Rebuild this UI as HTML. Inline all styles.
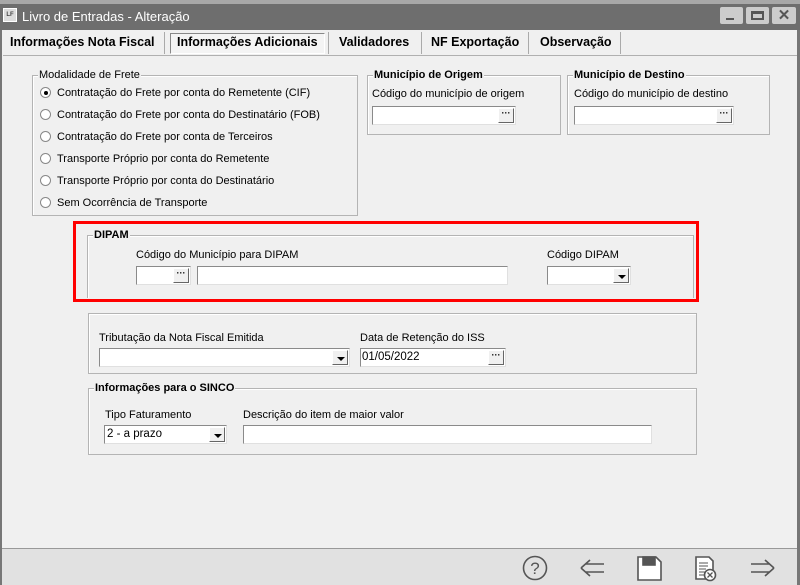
<!DOCTYPE html>
<html><head><meta charset="utf-8"><style>
*{margin:0;padding:0;box-sizing:border-box}
body{width:800px;height:585px;overflow:hidden;background:#f0f0f0;font-family:"Liberation Sans",sans-serif;font-size:11px;color:#000;position:relative}
.a{position:absolute}
.title{left:0;top:0;width:800px;height:30px;background:#6e6e6e;border-top:4px solid #a8a8a8}
.grp{position:absolute;border:1px solid #b4b4b4;box-shadow:1px 1px 0 #fff inset}
.gt{position:absolute;top:-7px;left:5px;background:#f0f0f0;padding:0 1px;font-size:11px}
.b{font-weight:bold}
.in{position:absolute;background:#fff;border:1px solid #8a8a8a;border-right-color:#e0e0e0;border-bottom-color:#e0e0e0;height:19px}
.btn{position:absolute;right:1px;top:1px;width:16px;height:15px;background:#f0f0f0;border:1px solid #fff;border-right-color:#666;border-bottom-color:#666;font-size:9px;line-height:9px;text-align:center;font-weight:bold}
.tri{position:absolute;left:4px;top:6px;width:0;height:0;border-left:4px solid transparent;border-right:4px solid transparent;border-top:4px solid #000}
.rad{position:absolute;width:11px;height:11px;border-radius:50%;border:1px solid #888;background:#fff}
.tab{position:absolute;top:35px;font-weight:bold;font-size:12.5px}
.sep{position:absolute;top:32px;width:1px;height:22px;background:#aaa}
</style></head><body>
<div class="a title"></div>
<div class="a" style="left:3px;top:8px;width:14px;height:14px;background:#ddd;border:1px solid #fff;font-size:6px;line-height:12px;text-align:center;font-weight:bold;color:#444">LF</div>
<div class="a" style="left:22px;top:9px;color:#fff;font-size:13px">Livro de Entradas - Alteração</div>
<div class="a" style="left:720px;top:7px;width:23px;height:17px;background:#ccc;border-radius:2px"><div class="a" style="left:6px;top:11px;width:8px;height:2px;background:#555"></div></div>
<div class="a" style="left:746px;top:7px;width:23px;height:17px;background:#ccc;border-radius:2px"><div class="a" style="left:5px;top:4px;width:13px;height:9px;border:2px solid #555;border-top-width:3px"></div></div>
<div class="a" style="left:772px;top:7px;width:24px;height:17px;background:#ccc;border-radius:2px;text-align:center;font-weight:bold;font-size:15px;line-height:17px;color:#555">✕</div>
<div class="a" style="left:0;top:30px;width:2px;height:555px;background:#777"></div>
<div class="a" style="left:797px;top:30px;width:3px;height:555px;background:#777"></div>
<div class="a" style="left:3px;top:55px;width:794px;height:1px;background:#b0b0b0"></div>
<div class="tab" style="left:10px">Informações Nota Fiscal</div>
<div class="sep" style="left:164px"></div>
<div class="a" style="left:170px;top:33px;width:155px;height:21px;border:1px solid #888;border-right-color:#fff;border-bottom-color:#fff;background:#f4f4f4"></div>
<div class="tab" style="left:177px">Informações Adicionais</div>
<div class="sep" style="left:328px"></div>
<div class="tab" style="left:339px">Validadores</div>
<div class="sep" style="left:421px"></div>
<div class="tab" style="left:431px">NF Exportação</div>
<div class="sep" style="left:528px"></div>
<div class="tab" style="left:540px">Observação</div>
<div class="sep" style="left:620px"></div>

<div class="grp" style="left:32px;top:75px;width:326px;height:141px"><div class="gt">Modalidade de Frete</div></div>
<div class="rad" style="left:40px;top:87px"><div class="a" style="left:3px;top:3px;width:4px;height:4px;border-radius:50%;background:#000"></div></div>
<div class="a" style="left:57px;top:87px">Contratação do Frete por conta do Remetente (CIF)</div>
<div class="rad" style="left:40px;top:109px"></div><div class="a" style="left:57px;top:109px">Contratação do Frete por conta do Destinatário (FOB)</div>
<div class="rad" style="left:40px;top:131px"></div><div class="a" style="left:57px;top:131px">Contratação do Frete por conta de Terceiros</div>
<div class="rad" style="left:40px;top:153px"></div><div class="a" style="left:57px;top:153px">Transporte Próprio por conta do Remetente</div>
<div class="rad" style="left:40px;top:175px"></div><div class="a" style="left:57px;top:175px">Transporte Próprio por conta do Destinatário</div>
<div class="rad" style="left:40px;top:197px"></div><div class="a" style="left:57px;top:197px">Sem Ocorrência de Transporte</div>

<div class="grp" style="left:367px;top:75px;width:194px;height:60px"><div class="gt b">Município de Origem</div></div>
<div class="a" style="left:372px;top:88px">Código do município de origem</div>
<div class="in" style="left:372px;top:106px;width:144px"><div class="btn">···</div></div>
<div class="grp" style="left:567px;top:75px;width:203px;height:60px"><div class="gt b">Município de Destino</div></div>
<div class="a" style="left:574px;top:88px">Código do município de destino</div>
<div class="in" style="left:574px;top:106px;width:160px"><div class="btn">···</div></div>

<div class="a" style="left:73px;top:221px;width:626px;height:81px;border:3px solid #f00"></div>
<div class="grp" style="left:87px;top:235px;width:607px;height:63px;border-bottom:none"><div class="gt b">DIPAM</div></div>
<div class="a" style="left:136px;top:249px">Código do Município para DIPAM</div>
<div class="a" style="left:547px;top:249px">Código DIPAM</div>
<div class="in" style="left:136px;top:266px;width:55px"><div class="btn">···</div></div>
<div class="in" style="left:197px;top:266px;width:311px"></div>
<div class="in" style="left:547px;top:266px;width:84px"><div class="btn"><div class="tri"></div></div></div>

<div class="grp" style="left:88px;top:313px;width:609px;height:61px"></div>
<div class="a" style="left:99px;top:332px">Tributação da Nota Fiscal Emitida</div>
<div class="a" style="left:360px;top:332px">Data de Retenção do ISS</div>
<div class="in" style="left:99px;top:348px;width:251px"><div class="btn"><div class="tri"></div></div></div>
<div class="in" style="left:360px;top:348px;width:146px;padding:2px 1px;font-size:11.5px">01/05/2022<div class="btn">···</div></div>

<div class="grp" style="left:88px;top:388px;width:609px;height:67px"><div class="gt b">Informações para o SINCO</div></div>
<div class="a" style="left:105px;top:409px">Tipo Faturamento</div>
<div class="a" style="left:243px;top:409px">Descrição do item de maior valor</div>
<div class="in" style="left:104px;top:425px;width:123px;padding:2px 2px;font-size:11.5px">2 - a prazo<div class="btn"><div class="tri"></div></div></div>
<div class="in" style="left:243px;top:425px;width:409px"></div>

<div class="a" style="left:2px;top:548px;width:795px;height:37px;background:#e1e1e1;border-top:1px solid #999"></div>
<svg class="a" style="left:520px;top:552px" width="270" height="32" viewBox="0 0 270 32" fill="none" stroke="#555" stroke-width="1.6">
<circle cx="15" cy="16" r="11.5"/><text x="15" y="22" text-anchor="middle" font-family="Liberation Sans" font-size="17" fill="#555" stroke="none">?</text>
<path d="M61 16 L70 8 M61 16 L70 24 M66 12 H84 M66 20 H84"/>
<path d="M118 5 H136 L141 10 V28 H118 Z" fill="#fff"/><rect x="123" y="5" width="12" height="8" fill="#555"/>
<path d="M176 5 H189 L193 9 V27 H176 Z" fill="#fff"/><path d="M179 11 H188 M179 14 H188 M179 17 H186 M179 20 H185 M179 23 H184" stroke-width="1"/>
<circle cx="190" cy="23" r="5.5" fill="#fff"/><path d="M187.5 20.5 L192.5 25.5 M192.5 20.5 L187.5 25.5" stroke-width="1.3"/>
<path d="M254 16 L245 8 M254 16 L245 24 M231 12 H249 M231 20 H249"/>
</svg>
</body></html>
